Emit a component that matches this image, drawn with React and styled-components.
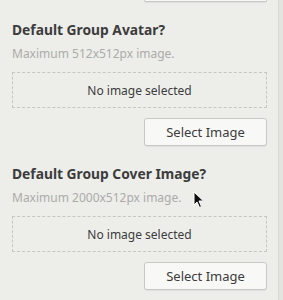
import styled, { createGlobalStyle } from 'styled-components';

const GlobalStyle = createGlobalStyle`
    html, body {
        margin: 0;
        padding: 0;
        background: #edeeea;
        font-family: 'Noto Sans', 'Open Sans', sans-serif;
        color: #3c3c3c;
    }
`;

const Page = styled.div`
    position: relative;
    display: flex;
    width: 283px;
    height: 300px;
    overflow: hidden;
`;

const Panel = styled.div`
    flex: 1;
    display: flex;
    flex-direction: column;
    padding: 0 11px 0 12px;
`;

const Edge = styled.div`
    width: 4px;
    background: #e3e3df;
    border-left: 1px solid #d8d8d4;
`;

const Field = styled.div`
    display: flex;
    flex-direction: column;
    margin-top: ${(p) => p.top}px;
`;

const Label = styled.div`
    font-size: 13.8px;
    font-weight: 700;
    line-height: 16px;
    color: #3c3c3c;
`;

const Hint = styled.div`
    margin-top: 8px;
    font-size: 12px;
    line-height: 15px;
    color: #ababa8;
`;

const DropZone = styled.div`
    margin-top: 11px;
    height: 34px;
    display: flex;
    align-items: center;
    justify-content: center;
    border: 1px dashed #c6c6c2;
    font-size: 12px;
    color: #3c3c3c;
`;

const Actions = styled.div`
    display: flex;
    justify-content: flex-end;
    margin-top: ${(p) => p.top ?? 10}px;
`;

const Button = styled.button`
    width: 123px;
    height: ${(p) => (p.stub ? 2 : 28)}px;
    box-sizing: border-box;
    border: 1px solid #c8c8c4;
    border-top-width: ${(p) => (p.stub ? 0 : 1)}px;
    border-radius: ${(p) => (p.stub ? '0 0 3px 3px' : '3px')};
    background: #f8f8f6;
    box-shadow: 0 1px 1px rgba(0, 0, 0, 0.06);
    font-family: inherit;
    font-size: 13px;
    color: #3c3c3c;
    padding: 0;
`;

const Cursor = styled.svg`
    position: absolute;
    left: 193px;
    top: 191px;
`;

function ImageField({ title, hint, top }) {
    return (
        <Field top={top}>
            <Label>{title}</Label>
            <Hint>{hint}</Hint>
            <DropZone>No image selected</DropZone>
            <Actions>
                <Button>Select Image</Button>
            </Actions>
        </Field>
    );
}

export default function App() {
    return (
        <Page>
            <GlobalStyle />
            <Panel>
                <Actions top={0}>
                    <Button stub />
                </Actions>
                <ImageField top={20} title="Default Group Avatar?" hint="Maximum 512x512px image." />
                <ImageField top={20} title="Default Group Cover Image?" hint="Maximum 2000x512px image." />
            </Panel>
            <Edge />
            <Cursor width="12" height="18" viewBox="0 0 12 18">
                <path d="M1 1 L1 14 L4 11 L6.5 16.5 L8.5 15.5 L6 10 L10.5 10 Z" fill="#111" stroke="#fff" strokeWidth="1" />
            </Cursor>
        </Page>
    );
}
